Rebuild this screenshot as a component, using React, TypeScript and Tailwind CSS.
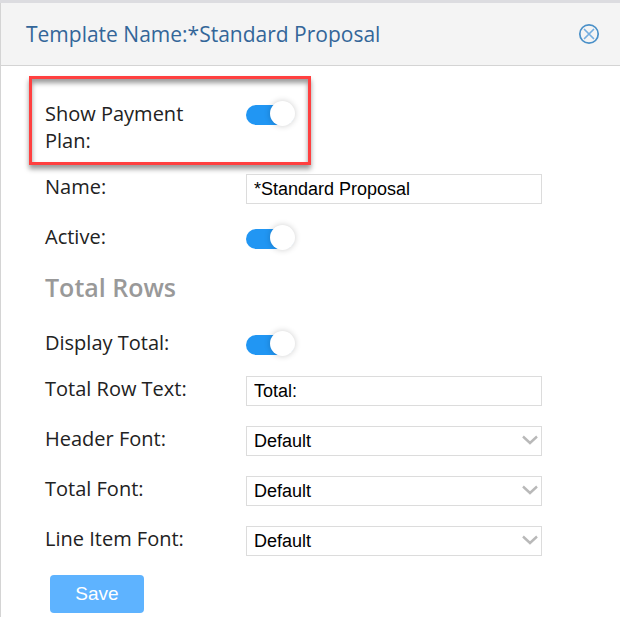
import { useState } from "react";
import type { ReactNode } from "react";

const FONTS = ["Default", "Arial", "Helvetica", "Times New Roman", "Courier"];

const inputClass =
    "block h-[30px] w-full rounded-none border border-[#dcdcdc] bg-white px-[7px] font-['Liberation_Sans',sans-serif] text-[18px] leading-6 text-black outline-none focus:border-[#2196f3]";

interface RowProps {
    id: string;
    label: string;
    children: ReactNode;
}

const Row = ({ id, label, children }: RowProps) => (
    <div className="flex min-h-[30px] items-center px-11">
        <label htmlFor={id} className="w-[201px] shrink-0 pb-1 leading-6">{label}</label>
        <div className="flex max-w-[296px] min-w-0 flex-1">{children}</div>
    </div>
);

interface ToggleProps {
    id: string;
    checked: boolean;
    onChange: (checked: boolean) => void;
}

const Toggle = ({ id, checked, onChange }: ToggleProps) => (
    <span className="relative flex h-5 w-12 items-center">
        <input
            id={id}
            type="checkbox"
            role="switch"
            checked={checked}
            onChange={(e) => onChange(e.target.checked)}
            className="peer h-5 w-12 cursor-pointer appearance-none rounded-full bg-[#ccc] checked:bg-[#2196f3]"
        />
        {/* Knob */}
        <span className="pointer-events-none absolute -top-1 left-0 size-[25px] rounded-full bg-white shadow-[0_0_6px_rgba(0,0,0,0.2)] transition-transform peer-checked:translate-x-6" />
    </span>
);

interface FontSelectProps {
    id: string;
    label: string;
}

const FontSelect = ({ id, label }: FontSelectProps) => (
    <Row id={id} label={label}>
        <div className="relative w-full">
            <select id={id} defaultValue="Default" className={`${inputClass} appearance-none`}>
                {FONTS.map((font) => (
                    <option key={font}>{font}</option>
                ))}
            </select>
            <svg
                width="16"
                height="10"
                viewBox="0 0 16 10"
                fill="none"
                stroke="#b9b9b9"
                strokeWidth="2.4"
                className="pointer-events-none absolute top-[9px] right-1"
            >
                <path d="M1 1.5L8 8L15 1.5" />
            </svg>
        </div>
    </Row>
);

export default function App() {
    const [showPlan, setShowPlan] = useState(true);
    const [active, setActive] = useState(true);
    const [displayTotal, setDisplayTotal] = useState(true);

    return (
        <div className="flex min-h-screen flex-col border-t-3 border-t-[#dcdce0] bg-white font-['Open_Sans',sans-serif] text-[20px] text-[#222]">
            <div className="flex-1 border-l border-[#d4d4d4]">
                <header className="flex h-[63px] items-center justify-between border-b border-[#d4d4d4] bg-[#f4f4f4] pr-5 pl-[25px]">
                    <h1 className="text-[21px] leading-7 text-[#336699]">Template Name:*Standard Proposal</h1>
                    <button type="button" aria-label="Close" className="cursor-pointer">
                        <svg width="22" height="22" viewBox="0 0 22 22" fill="none">
                            <circle cx="11" cy="11" r="9.2" stroke="#4a90c8" strokeWidth="1.7" />
                            <path d="M6.5 6.5L15.5 15.5M15.5 6.5L6.5 15.5" stroke="#75aee0" strokeWidth="1.7" strokeLinecap="round" />
                        </svg>
                    </button>
                </header>

                <form className="pt-[10px]" onSubmit={(e) => e.preventDefault()}>
                    {/* Highlighted setting */}
                    <div className="ml-7 flex w-[282px] border-3 border-[#ff4040] pt-[21px] pb-2 pl-[13px] shadow-[0_4px_5px_rgba(0,0,0,0.4),inset_0_4px_5px_rgba(0,0,0,0.4)]">
                        <label htmlFor="show-plan" className="w-[201px] shrink-0 pr-10 leading-[27px]">Show Payment Plan:</label>
                        <div className="pt-[5px]">
                            <Toggle id="show-plan" checked={showPlan} onChange={setShowPlan} />
                        </div>
                    </div>

                    <div className="mt-[9px] flex flex-col gap-5">
                        <Row id="name" label="Name:">
                            <input id="name" type="text" defaultValue="*Standard Proposal" className={inputClass} />
                        </Row>
                        <Row id="active" label="Active:">
                            <Toggle id="active" checked={active} onChange={setActive} />
                        </Row>
                    </div>

                    <h2 className="mt-[15px] mb-[25px] px-11 text-[25px] leading-9 font-semibold text-[#999]">Total Rows</h2>

                    <Row id="display-total" label="Display Total:">
                        <Toggle id="display-total" checked={displayTotal} onChange={setDisplayTotal} />
                    </Row>

                    <div className="mt-4 flex flex-col gap-5">
                        <Row id="total-text" label="Total Row Text:">
                            <input id="total-text" type="text" defaultValue="Total:" className={inputClass} />
                        </Row>
                        <FontSelect id="header-font" label="Header Font:" />
                        <FontSelect id="total-font" label="Total Font:" />
                        <FontSelect id="line-font" label="Line Item Font:" />
                    </div>

                    <button
                        type="submit"
                        className="mt-[19px] ml-[49px] flex h-[38px] w-[94px] cursor-pointer items-center justify-center rounded bg-[#5eb3ff] font-['Liberation_Sans',sans-serif] text-[19px] text-white hover:bg-[#4aa5f5]"
                    >
                        Save
                    </button>
                </form>
            </div>
        </div>
    );
}
